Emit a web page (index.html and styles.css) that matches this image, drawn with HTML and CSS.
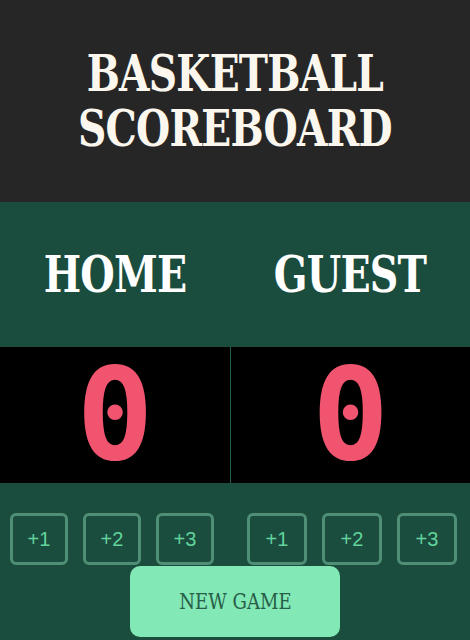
FILE: index.html
```html
<!DOCTYPE html>
<html lang="en">
<head>
<meta charset="utf-8">
<title>Basketball Scoreboard</title>
<link rel="stylesheet" href="styles.css">
</head>
<body>
  <header class="header">
    <h1 class="title">BASKETBALL<br>SCOREBOARD</h1>
  </header>
  <section class="names">
    <h2 class="team-name">HOME</h2>
    <h2 class="team-name">GUEST</h2>
  </section>
  <section class="scores">
    <div class="score">0</div>
    <div class="score score-right">0</div>
  </section>
  <section class="controls">
    <div class="btn-row">
      <div class="btn-group btn-group-left">
        <button class="add-btn">+1</button>
        <button class="add-btn">+2</button>
        <button class="add-btn">+3</button>
      </div>
      <div class="btn-group btn-group-right">
        <button class="add-btn">+1</button>
        <button class="add-btn">+2</button>
        <button class="add-btn">+3</button>
      </div>
    </div>
    <button class="new-game"><span class="new-game-label">NEW GAME</span></button>
  </section>
</body>
</html>
```
FILE: styles.css
```css
* { box-sizing: border-box; }
html, body { margin: 0; padding: 0; }
body {
  width: 470px;
  height: 640px;
  overflow: hidden;
  background: #1b4d3e;
  font-family: "DejaVu Serif", serif;
}
.header {
  height: 202px;
  background: #262626;
  display: flex;
  align-items: center;
  justify-content: center;
}
.title {
  margin: 0;
  color: #fbf7ee;
  font-family: "DejaVu Serif", serif;
  font-weight: bold;
  font-size: 51px;
  line-height: 55px;
  text-align: center;
  letter-spacing: -1px;
  transform: scaleX(0.77);
}
.names {
  height: 145px;
  display: grid;
  grid-template-columns: 230px 1fr;
  align-items: center;
}
.team-name {
  margin: 0;
  color: #ffffff;
  font-family: "DejaVu Serif", serif;
  font-weight: bold;
  font-size: 51px;
  line-height: 1;
  text-align: center;
  letter-spacing: -1px;
  transform: scaleX(0.775);
}
.scores {
  height: 136px;
  display: grid;
  grid-template-columns: 230px 1fr;
  background: #000;
}
.score {
  display: flex;
  align-items: center;
  justify-content: center;
  color: #f0546f;
  font-family: "DejaVu Sans Mono", monospace;
  font-weight: bold;
  font-size: 128px;
  line-height: 1;
}
.score-right {
  border-left: 1px solid #23604a;
}
.controls {
  padding-top: 30px;
  display: flex;
  flex-direction: column;
  align-items: center;
}
.btn-row {
  width: 100%;
  display: grid;
  grid-template-columns: 230px 1fr;
}
.btn-group {
  display: flex;
  gap: 15px;
}
.btn-group-left { padding: 0 16px 0 10px; }
.btn-group-right { padding: 0 13px 0 17px; }
.add-btn {
  flex: 1;
  height: 52px;
  background: transparent;
  border: 3px solid #4f8f75;
  border-radius: 6px;
  color: #62d39c;
  font-family: "Liberation Sans", Arial, sans-serif;
  font-size: 20px;
  padding: 0;
}
.new-game {
  margin-top: 1px;
  width: 210px;
  height: 71px;
  background: #82e8b5;
  border: none;
  border-radius: 10px;
  padding: 0;
  color: #285e49;
  font-family: "DejaVu Serif", serif;
  font-size: 22px;
}
.new-game-label {
  display: inline-block;
  transform: scaleX(0.82);
}
```
